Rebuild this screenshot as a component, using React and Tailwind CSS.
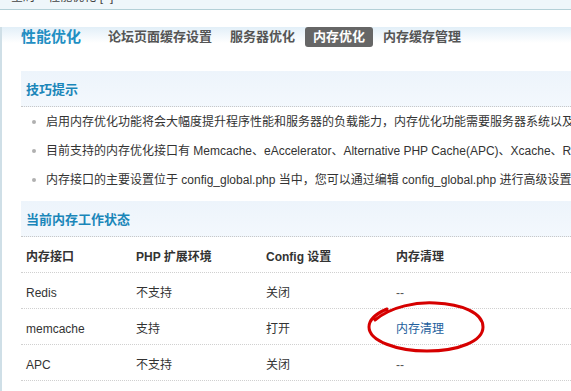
import React from 'react';

const font = "font-['Liberation_Sans','Noto_Sans_CJK_SC',sans-serif]";

const tips = [
  '启用内存优化功能将会大幅度提升程序性能和服务器的负载能力，内存优化功能需要服务器系统以及PHP扩展模块支持',
  '目前支持的内存优化接口有 Memcache、eAccelerator、Alternative PHP Cache(APC)、Xcache、Redis，优化系统将会依据当前服务器环境依次选用接口',
  '内存接口的主要设置位于 config_global.php 当中，您可以通过编辑 config_global.php 进行高级设置',
];

const rows = [
  { name: 'Redis', ext: '不支持', conf: '关闭', clear: null },
  { name: 'memcache', ext: '支持', conf: '打开', clear: '内存清理' },
  { name: 'APC', ext: '不支持', conf: '关闭', clear: null },
];

function SectionHeader({ children }) {
  return (
    <div className="h-[36px] flex items-center pt-[3px] pl-[5px] bg-[linear-gradient(to_bottom,#edf4fb,#f3f8fd)] border-b border-dotted border-[#c8c8c8] text-[13px] font-bold text-[#1a86b9]">
      {children}
    </div>
  );
}

function Ellipse() {
  return (
    <svg
      className="absolute left-[-24px] top-[-9px] pointer-events-none"
      width="120"
      height="54"
      viewBox="0 0 120 54"
      fill="none"
    >
      <path
        d="M 8 20 C 25 6, 50 2, 68 3 C 95 4, 116 13, 116 27 C 116 41, 92 51, 60 51 C 30 51, 2 41, 2 27 C 2 20, 8 14, 20 9"
        stroke="#d60000"
        strokeWidth="3"
        strokeLinecap="round"
      />
    </svg>
  );
}

export default function App() {
  return (
    <div className={`w-[571px] h-[391px] overflow-hidden bg-white whitespace-nowrap text-[12px] text-[#333] ${font}`}>
      {/* breadcrumb strip, clipped */}
      <div className="h-[10px] overflow-hidden bg-[#eef6fa] border-b border-[#b3d0d7]">
        <div className="mt-[-11px] pl-[11px] text-[12px] leading-[16px] text-[#444]">
          全局 » 性能优化 [+]
        </div>
      </div>

      <div className="h-[381px] border-l-2 border-[#cfdfe7] pl-[19px] bg-[linear-gradient(to_bottom,#e2eff8,#ffffff_16px)]">
        {/* title + nav */}
        <div className="mt-[17px] h-[20px] flex items-center">
          <div className="w-[79px] text-[15px] font-bold text-[#1f8fc3]">性能优化</div>
          <div className="flex items-center gap-[2px] text-[13px] font-bold text-[#555]">
            <span className="px-2 h-[20px] flex items-center">论坛页面缓存设置</span>
            <span className="px-2 h-[20px] flex items-center">服务器优化</span>
            <span className="px-2 h-[20px] flex items-center rounded-[3px] bg-[#666] text-white">内存优化</span>
            <span className="px-2 h-[20px] flex items-center">内存缓存管理</span>
          </div>
        </div>

        {/* tips */}
        <div className="mt-[24px]">
          <SectionHeader>技巧提示</SectionHeader>
          <ul className="pb-[7px]">
            {tips.map((t) => (
              <li key={t} className="h-[29px] flex items-center pt-[1px] pl-[11px] gap-[10px]">
                <span className="w-[4px] h-[4px] rounded-full bg-[#b0b0b0] shrink-0" />
                <span>{t}</span>
              </li>
            ))}
          </ul>
        </div>

        {/* status */}
        <div>
          <SectionHeader>当前内存工作状态</SectionHeader>
          <div className="h-[36px] flex items-center pt-[4px] border-b border-dotted border-[#d0d0d0] font-bold text-[#333]">
            <div className="w-[110px] pl-[5px]">内存接口</div>
            <div className="w-[130px] pl-[5px]">PHP 扩展环境</div>
            <div className="w-[130px] pl-[5px]">Config 设置</div>
            <div className="pl-[5px]">内存清理</div>
          </div>
          {rows.map((r) => (
            <div key={r.name} className="h-[36px] flex items-stretch border-b border-dotted border-[#d0d0d0]">
              <div className="w-[110px] pl-[5px] pt-[4px] flex items-center">{r.name}</div>
              <div className="w-[130px] pl-[5px] pt-[4px] flex items-center">{r.ext}</div>
              <div className="w-[130px] pl-[5px] pt-[4px] flex items-center">{r.conf}</div>
              <div className="pl-[5px] pt-[4px] flex items-center relative">
                {r.clear ? (
                  <>
                    <a className="text-[#23609d] relative">{r.clear}</a>
                    <Ellipse />
                  </>
                ) : (
                  <span className="text-[#555]">--</span>
                )}
              </div>
            </div>
          ))}
        </div>
      </div>
    </div>
  );
}
